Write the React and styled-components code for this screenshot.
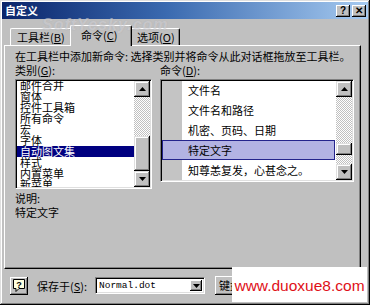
import React from "react";
import styled, { createGlobalStyle } from "styled-components";

const CJK = `"Noto Sans CJK SC", "Noto Sans", sans-serif`;

const Global = createGlobalStyle`
  html, body { margin: 0; padding: 0; background: #c0c0c0; }
  body { width: 370px; height: 305px; overflow: hidden; font-family: ${CJK}; }
  * { box-sizing: border-box; }
`;

const Window = styled.div`
  position: relative;
  width: 370px;
  height: 305px;
  background: #c0c0c0;
  padding: 2px;
  display: flex;
  flex-direction: column;
  box-shadow: inset -1px -1px #000, inset 1px 1px #dfdfdf, inset -2px -2px #808080, inset 2px 2px #fff;
  font-family: ${CJK};
  font-size: 11px;
  color: #000;
`;

const TitleBar = styled.div`
  height: 17px;
  display: flex;
  align-items: center;
  padding: 0 2px 0 3px;
  background: linear-gradient(to right, #0a246a 0%, #3a6ab0 45%, #a6caf0 100%);
`;

const TitleText = styled.span`
  color: #fff;
  font-weight: bold;
  font-size: 11px;
  line-height: 17px;
  flex: 1;
`;

const TitleBtn = styled.div`
  width: 14px;
  height: 12px;
  margin-left: ${p => p.$gap || 0}px;
  background: #c0c0c0;
  box-shadow: inset -1px -1px #000, inset 1px 1px #fff, inset -2px -2px #808080;
  display: flex;
  align-items: center;
  justify-content: center;
  font-family: "Liberation Sans", sans-serif;
  font-weight: bold;
  font-size: 10px;
  line-height: 1;
`;

const TabRow = styled.div`
  display: flex;
  align-items: flex-end;
  height: 21px;
  margin-top: 5px;
  padding-left: 8px;
  position: relative;
  z-index: 1;
`;

const Tab = styled.div`
  width: ${p => p.$w}px;
  height: ${p => (p.$active ? 21 : 17)}px;
  margin: ${p => (p.$active ? "0 -2px -1px -2px" : "0")};
  background: #c0c0c0;
  border-top: 1px solid #fff;
  border-left: 1px solid #fff;
  border-right: 1px solid #000;
  border-top-left-radius: 2px;
  border-top-right-radius: 2px;
  box-shadow: inset -1px 0 #808080;
  display: flex;
  align-items: ${p => (p.$active ? "flex-start" : "center")};
  padding: ${p => (p.$active ? "3px 0 0 10px" : "0 0 0 6px")};
  font-size: 11px;
  line-height: 13px;
  white-space: nowrap;
  position: relative;
  z-index: ${p => (p.$active ? 2 : 1)};
`;

const Key = styled.span`
  text-decoration: underline;
`;

const Panel = styled.div`
  margin-left: 2px;
  width: 357px;
  height: 224px;
  background: #c0c0c0;
  border-top: 1px solid #fff;
  border-left: 1px solid #fff;
  border-right: 1px solid #000;
  border-bottom: 1px solid #000;
  box-shadow: inset -1px -1px #808080;
  padding: 3px 0 0 10px;
  display: flex;
  flex-direction: column;
`;

const Line = styled.div`
  font-size: 11px;
  line-height: 14px;
  height: 14px;
  white-space: nowrap;
  margin-top: ${p => p.$mt || 0}px;
`;

const Grid = styled.div`
  display: grid;
  grid-template-columns: 137px 194px;
  column-gap: 8px;
  row-gap: 2px;
  align-items: start;
`;

const ListBox = styled.div`
  height: ${p => p.$h}px;
  background: #fff;
  border-top: 1px solid #808080;
  border-left: 1px solid #808080;
  border-right: 1px solid #fff;
  border-bottom: 1px solid #fff;
  box-shadow: inset 1px 1px #000, inset -1px -1px #dfdfdf;
  padding: 1px;
  display: flex;
  overflow: hidden;
`;

const Items = styled.div`
  flex: 1;
  overflow: hidden;
  background: ${p => (p.$gutter ? "linear-gradient(to right, #c4c4c4 20px, #ffffff 20px)" : "#fff")};
`;

const SmallItem = styled.div`
  height: 11px;
  line-height: 11px;
  font-size: 11px;
  padding-left: 3px;
  white-space: nowrap;
  margin-top: ${p => p.$mt || 0}px;
  background: ${p => (p.$sel ? "#000080" : "transparent")};
  color: ${p => (p.$sel ? "#fff" : "#000")};
`;

const CmdItem = styled.div`
  height: 20px;
  line-height: 18px;
  font-size: 11px;
  padding-left: 25px;
  white-space: nowrap;
  margin-top: ${p => p.$mt || 0}px;
  margin-right: 1px;
  border: 1px solid ${p => (p.$sel ? "#24248c" : "transparent")};
  background: ${p => (p.$sel ? "#b3b3e3" : "transparent")};
`;

const ScrollBar = styled.div`
  width: 16px;
  display: flex;
  flex-direction: column;
`;

const Bevel = styled.div`
  width: 16px;
  height: ${p => p.$h || 16}px;
  flex-shrink: 0;
  background: #c0c0c0;
  box-shadow: inset -1px -1px #000, inset 1px 1px #dfdfdf, inset -2px -2px #808080, inset 2px 2px #fff;
  display: flex;
  align-items: center;
  justify-content: center;
`;

const Track = styled.div`
  flex: 1;
  padding-top: ${p => p.$offset}px;
  background: repeating-conic-gradient(#c0c0c0 0 25%, #ffffff 0 50%) 0 0 / 2px 2px;
`;

const BottomRow = styled.div`
  flex: 1;
  display: flex;
  align-items: center;
  padding-left: 8px;
  padding-bottom: 1px;
`;

const HelpBtn = styled.div`
  width: 18px;
  height: 18px;
  background: #c0c0c0;
  box-shadow: inset -1px -1px #000, inset 1px 1px #fff, inset -2px -2px #808080;
  display: flex;
  align-items: center;
  justify-content: center;
`;

const Label = styled.span`
  font-size: 11px;
  line-height: 14px;
  width: ${p => p.$w}px;
  margin-left: ${p => p.$ml || 0}px;
  white-space: nowrap;
`;

const Combo = styled.div`
  width: 110px;
  height: 17px;
  background: #fff;
  border-top: 1px solid #808080;
  border-left: 1px solid #808080;
  border-right: 1px solid #fff;
  border-bottom: 1px solid #fff;
  box-shadow: inset 1px 1px #000, inset -1px -1px #dfdfdf;
  padding: 2px 2px 2px 3px;
  display: flex;
  align-items: center;
`;

const ComboText = styled.span`
  flex: 1;
  font-family: "Liberation Mono", "DejaVu Sans Mono", monospace;
  font-size: 9.5px;
  line-height: 11px;
`;

const ComboBtn = styled.div`
  width: 12px;
  height: 11px;
  background: #c0c0c0;
  box-shadow: inset -1px -1px #000, inset 1px 1px #fff, inset -2px -2px #808080;
  display: flex;
  align-items: center;
  justify-content: center;
`;

const Button = styled.div`
  margin-left: 10px;
  width: 90px;
  height: 19px;
  background: #c0c0c0;
  box-shadow: inset -1px -1px #000, inset 1px 1px #fff, inset -2px -2px #808080;
  font-size: 11px;
  line-height: 19px;
  padding-left: 4px;
  white-space: nowrap;
`;

const Watermark = styled.div`
  position: absolute;
  left: 232px;
  top: 267px;
  width: 135px;
  height: 35px;
  background: #fff;
  display: flex;
  align-items: center;
  justify-content: center;
  font-family: "Liberation Sans", Arial, sans-serif;
  font-size: 15.5px;
  color: #e01018;
  padding-top: 3px;
`;

const TopMark = styled.div`
  position: absolute;
  left: 42px;
  top: 16px;
  font-family: "Liberation Sans", Arial, sans-serif;
  font-weight: bold;
  font-style: italic;
  font-size: 16px;
  letter-spacing: 1px;
  color: rgba(235, 235, 235, 0.45);
  text-shadow: 0 0 1px rgba(120, 120, 140, 0.35);
  pointer-events: none;
  z-index: 5;
`;

const Up = () => (
  <svg width="7" height="4" viewBox="0 0 7 4"><path d="M3.5 0 L7 4 L0 4 Z" fill="#000" /></svg>
);
const Down = () => (
  <svg width="7" height="4" viewBox="0 0 7 4"><path d="M0 0 L7 0 L3.5 4 Z" fill="#000" /></svg>
);

const VScroll = ({ offset, thumb }) => (
  <ScrollBar>
    <Bevel><Up /></Bevel>
    <Track $offset={offset}>
      <Bevel $h={thumb} />
    </Track>
    <Bevel><Down /></Bevel>
  </ScrollBar>
);

const categories = ["邮件合并", "窗体", "控件工具箱", "所有命令", "宏", "字体", "自动图文集", "样式", "内置菜单", "新菜单"];
const commands = ["文件名", "文件名和路径", "机密、页码、日期", "特定文字", "知尊恙复发，心甚念之。"];

export default function App() {
  return (
    <>
      <Global />
      <Window>
        <TitleBar>
          <TitleText>自定义</TitleText>
          <TitleBtn>?</TitleBtn>
          <TitleBtn $gap={2}>✕</TitleBtn>
        </TitleBar>
        <TabRow>
          <Tab $w={62}>工具栏(<Key>B</Key>)</Tab>
          <Tab $w={62} $active>命令(<Key>C</Key>)</Tab>
          <Tab $w={50}>选项(<Key>O</Key>)</Tab>
        </TabRow>
        <Panel>
          <Line>在工具栏中添加新命令:&nbsp;选择类别并将命令从此对话框拖放至工具栏。</Line>
          <Grid>
            <Line>类别(<Key>G</Key>):</Line>
            <Line>命令(<Key>D</Key>):</Line>
            <ListBox $h={110}>
              <Items>
                {categories.map((c, i) => (
                  <SmallItem key={c} $mt={i === 0 ? -1 : 0} $sel={c === "自动图文集"}>{c}</SmallItem>
                ))}
              </Items>
              <VScroll offset={39} thumb={35} />
            </ListBox>
            <ListBox $h={103}>
              <Items $gutter>
                {commands.map((c, i) => (
                  <CmdItem key={c} $mt={i === 0 ? -1 : 0} $sel={c === "特定文字"}>{c}</CmdItem>
                ))}
              </Items>
              <VScroll offset={46} thumb={12} />
            </ListBox>
          </Grid>
          <Line $mt={2}>说明:</Line>
          <Line>特定文字</Line>
        </Panel>
        <BottomRow>
          <HelpBtn>
            <svg width="12" height="13" viewBox="0 0 12 13">
              <path d="M0.5 0.5 H11.5 V9.5 H6 L3 12.5 V9.5 H0.5 Z" fill="#ffffe0" stroke="#000" />
              <text x="6" y="8.5" textAnchor="middle" fontFamily="Liberation Sans, sans-serif" fontWeight="bold" fontSize="9" fill="#000">?</text>
            </svg>
          </HelpBtn>
          <Label $ml={9} $w={58}>保存于(<Key>S</Key>):</Label>
          <Combo>
            <ComboText>Normal.dot</ComboText>
            <ComboBtn><Down /></ComboBtn>
          </Combo>
          <Button>键盘(<Key>K</Key>)...</Button>
        </BottomRow>
        <TopMark>SoftYesky.com</TopMark>
        <Watermark>www.duoxue8.com</Watermark>
      </Window>
    </>
  );
}
